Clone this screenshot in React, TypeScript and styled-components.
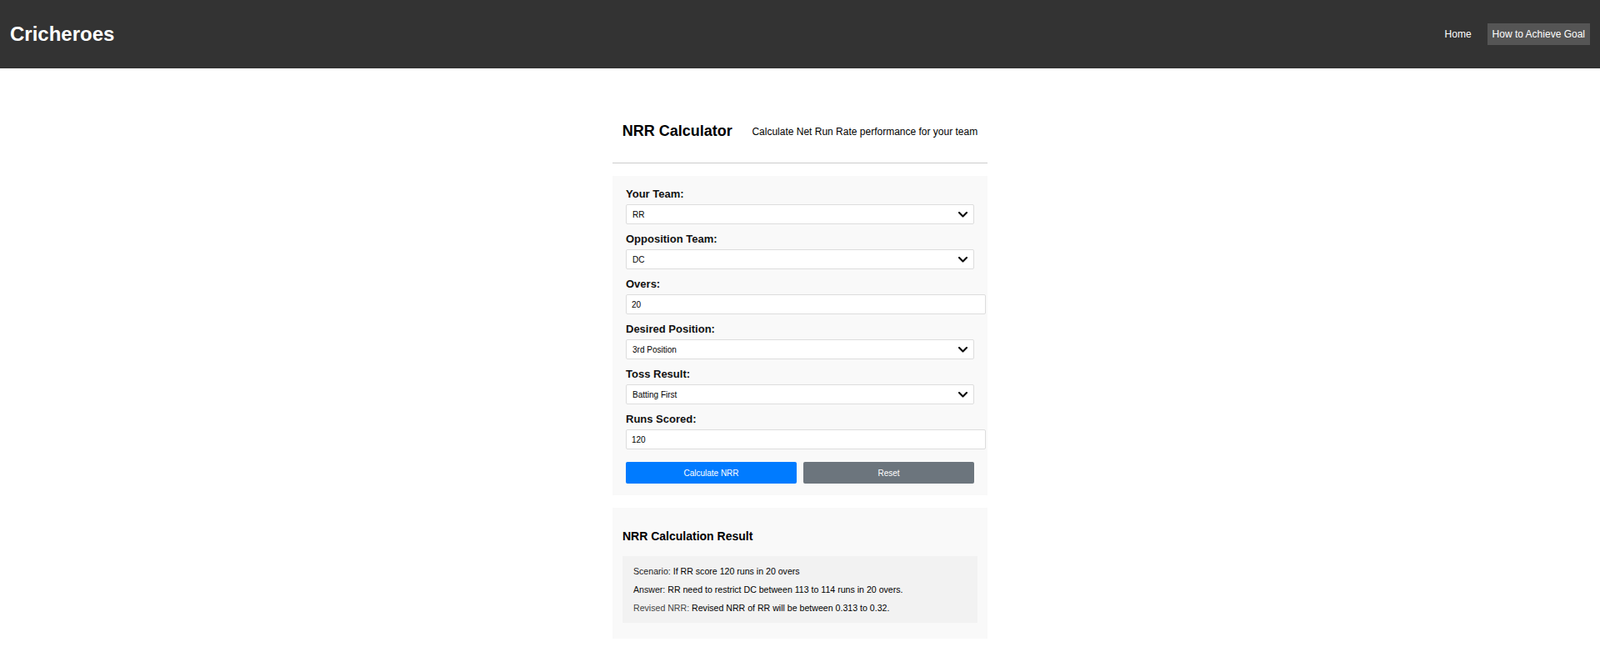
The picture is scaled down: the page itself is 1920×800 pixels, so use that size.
import React from "react";
import styled, { createGlobalStyle } from "styled-components";

const GlobalStyle = createGlobalStyle`
  html, body { margin: 0; padding: 0; background: #ffffff; }
  body { font-family: "Liberation Sans", Arial, sans-serif; color: #000; }
  * { font-family: inherit; }
`;

const TopBar = styled.header`
  height: 82px;
  background: #333333;
  display: flex;
  align-items: center;
  justify-content: space-between;
  padding: 0 12px;
  box-sizing: border-box;
`;

const Logo = styled.div`
  color: #ffffff;
  font-size: 24px;
  font-weight: bold;
`;

const Nav = styled.nav`
  display: flex;
  align-items: center;
  gap: 13px;
`;

const NavLink = styled.a<{ $active?: boolean }>`
  color: #ffffff;
  font-size: 12px;
  line-height: 14px;
  padding: 6px;
  text-decoration: none;
  background: ${(p) => (p.$active ? "#555555" : "transparent")};
`;

const Main = styled.main`
  width: 450px;
  margin: 0 auto;
`;

const TitleBar = styled.div`
  margin-top: 65px;
  padding-bottom: 27px;
  border-bottom: 1px solid #cccccc;
  display: flex;
  align-items: center;
  justify-content: space-around;
  margin-bottom: 15px;
`;

const Title = styled.h1`
  margin: 0;
  font-size: 18px;
  font-weight: bold;
`;

const Subtitle = styled.p`
  margin: 0;
  font-size: 12px;
`;

const Card = styled.section`
  background: #f9f9f9;
  padding: 14px 16px;
`;

const ResultCard = styled.section`
  background: #f9f9f9;
  margin-top: 15px;
  padding: 12px;
`;

const Group = styled.div`
  margin-bottom: 10px;
`;

const Label = styled.label`
  display: block;
  font-size: 13px;
  line-height: 15px;
  font-weight: bold;
  color: #111;
  margin-bottom: 5px;
`;

const SelectWrap = styled.div`
  position: relative;
`;

const Select = styled.select`
  appearance: none;
  -webkit-appearance: none;
  display: block;
  width: 100%;
  height: 24px;
  box-sizing: border-box;
  padding: 0 24px 0 7px;
  border: 1px solid #dddddd;
  border-radius: 2px;
  background: #ffffff;
  font-size: 10px;
  color: #000;
  outline: none;
`;

const Chevron = styled.svg`
  position: absolute;
  right: 8px;
  top: 9px;
  pointer-events: none;
`;

const Input = styled.input`
  display: block;
  width: 100%;
  box-sizing: content-box;
  height: 22px;
  padding: 0 6px;
  border: 1px solid #dddddd;
  border-radius: 2px;
  background: #ffffff;
  font-size: 10px;
  color: #000;
  outline: none;
`;

const ButtonRow = styled.div`
  display: flex;
  gap: 8px;
  margin-top: 15px;
`;

const Button = styled.button<{ $variant: "primary" | "secondary" }>`
  flex: 1;
  height: 26px;
  border: none;
  border-radius: 2px;
  color: #ffffff;
  font-size: 10px;
  cursor: pointer;
  background: ${(p) => (p.$variant === "primary" ? "#007bff" : "#6c757d")};
`;

const ResultTitle = styled.h3`
  margin: 14px 0 16px;
  font-size: 14px;
  font-weight: bold;
`;

const ResultBox = styled.div`
  background: #f2f2f2;
  padding: 12px 13px;
  margin-bottom: 7px;
`;

const ResultLine = styled.p`
  margin: 0 0 10px;
  font-size: 10.6px;
  color: #000;
  &:last-child { margin-bottom: 0; }
`;

const Key = styled.span<{ $tone: string }>`
  color: ${(p) => p.$tone};
`;

const ChevronIcon = () => (
  <Chevron width="11" height="7" viewBox="0 0 11 7">
    <polyline points="1,1 5.5,5.5 10,1" fill="none" stroke="#111" strokeWidth="2.2" strokeLinecap="round" strokeLinejoin="round" />
  </Chevron>
);

const SelectField: React.FC<{ label: string; value: string; options: string[] }> = ({ label, value, options }) => (
  <Group>
    <Label>{label}</Label>
    <SelectWrap>
      <Select defaultValue={value}>
        {options.map((o) => (
          <option key={o} value={o}>{o}</option>
        ))}
      </Select>
      <ChevronIcon />
    </SelectWrap>
  </Group>
);

const InputField: React.FC<{ label: string; value: string; last?: boolean }> = ({ label, value }) => (
  <Group>
    <Label>{label}</Label>
    <Input type="number" defaultValue={value} />
  </Group>
);

const LastGroup = styled(Group)`
  margin-bottom: 0;
`;

const teams = ["CSK", "MI", "RCB", "KKR", "RR", "DC", "PBKS", "SRH", "LSG", "GT"];

export default function App() {
  return (
    <>
      <GlobalStyle />
      <TopBar>
        <Logo>Cricheroes</Logo>
        <Nav>
          <NavLink href="#">Home</NavLink>
          <NavLink href="#" $active>How to Achieve Goal</NavLink>
        </Nav>
      </TopBar>
      <Main>
        <TitleBar>
          <Title>NRR Calculator</Title>
          <Subtitle>Calculate Net Run Rate performance for your team</Subtitle>
        </TitleBar>
        <Card>
          <SelectField label="Your Team:" value="RR" options={teams} />
          <SelectField label="Opposition Team:" value="DC" options={teams} />
          <InputField label="Overs:" value="20" />
          <SelectField
            label="Desired Position:"
            value="3rd Position"
            options={["1st Position", "2nd Position", "3rd Position", "4th Position", "5th Position"]}
          />
          <SelectField label="Toss Result:" value="Batting First" options={["Batting First", "Bowling First"]} />
          <LastGroup>
            <Label>Runs Scored:</Label>
            <Input type="number" defaultValue="120" />
          </LastGroup>
          <ButtonRow>
            <Button $variant="primary">Calculate NRR</Button>
            <Button $variant="secondary">Reset</Button>
          </ButtonRow>
        </Card>
        <ResultCard>
          <ResultTitle>NRR Calculation Result</ResultTitle>
          <ResultBox>
            <ResultLine>
              <Key $tone="#222222">Scenario:</Key> If RR score 120 runs in 20 overs
            </ResultLine>
            <ResultLine>
              <Key $tone="#111111">Answer:</Key> RR need to restrict DC between 113 to 114 runs in 20 overs.
            </ResultLine>
            <ResultLine>
              <Key $tone="#444444">Revised NRR:</Key> Revised NRR of RR will be between 0.313 to 0.32.
            </ResultLine>
          </ResultBox>
        </ResultCard>
      </Main>
    </>
  );
}
